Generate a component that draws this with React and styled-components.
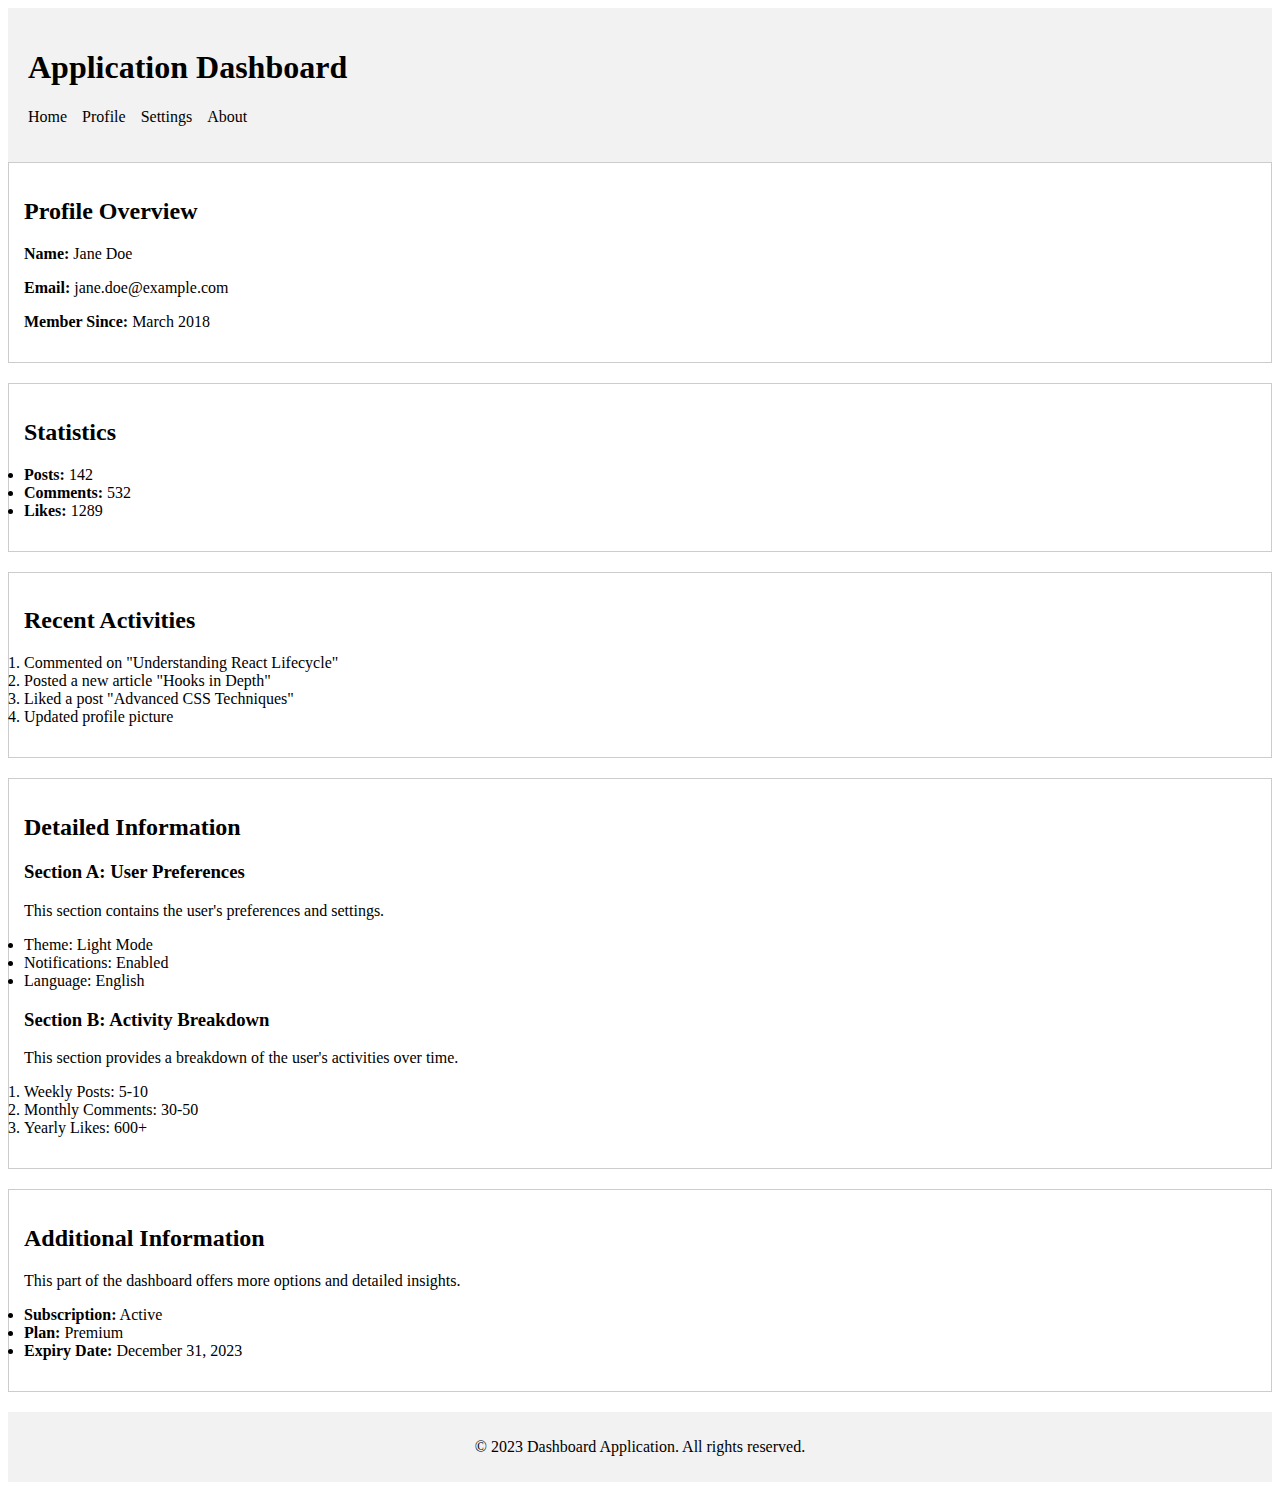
import styled, { createGlobalStyle } from 'styled-components';

const GlobalStyle = createGlobalStyle`
  body {
    margin: 8px;
    font-family: 'Liberation Serif', 'Times New Roman', serif;
    font-size: 16px;
    color: #000;
    background: #fff;
  }
`;

const navItems = ['Home', 'Profile', 'Settings', 'About'];

const App = () => {
  return (
    <>
      <GlobalStyle />
      <Header>
        <h1>Application Dashboard</h1>
        <NavList>
          {navItems.map((item) => (
            <li key={item}>
              <a href={'#'}>{item}</a>
            </li>
          ))}
        </NavList>
      </Header>
      <main>
        <Card>
          <h2>Profile Overview</h2>
          <p>
            <strong>Name:</strong> Jane Doe
          </p>
          <p>
            <strong>Email:</strong> jane.doe@example.com
          </p>
          <p>
            <strong>Member Since:</strong> March 2018
          </p>
        </Card>
        <Card>
          <h2>Statistics</h2>
          <ul>
            <li>
              <strong>Posts:</strong> 142
            </li>
            <li>
              <strong>Comments:</strong> 532
            </li>
            <li>
              <strong>Likes:</strong> 1289
            </li>
          </ul>
        </Card>
        <Card>
          <h2>Recent Activities</h2>
          <ol>
            <li>Commented on "Understanding React Lifecycle"</li>
            <li>Posted a new article "Hooks in Depth"</li>
            <li>Liked a post "Advanced CSS Techniques"</li>
            <li>Updated profile picture</li>
          </ol>
        </Card>
        <Card>
          <h2>Detailed Information</h2>
          <h3>Section A: User Preferences</h3>
          <p>This section contains the user's preferences and settings.</p>
          <ul>
            <li>Theme: Light Mode</li>
            <li>Notifications: Enabled</li>
            <li>Language: English</li>
          </ul>
          <h3>Section B: Activity Breakdown</h3>
          <p>This section provides a breakdown of the user's activities over time.</p>
          <ol>
            <li>Weekly Posts: 5-10</li>
            <li>Monthly Comments: 30-50</li>
            <li>Yearly Likes: 600+</li>
          </ol>
        </Card>
        <Card>
          <h2>Additional Information</h2>
          <p>This part of the dashboard offers more options and detailed insights.</p>
          <ul>
            <li>
              <strong>Subscription:</strong> Active
            </li>
            <li>
              <strong>Plan:</strong> Premium
            </li>
            <li>
              <strong>Expiry Date:</strong> December 31, 2023
            </li>
          </ul>
        </Card>
      </main>
      <Footer>
        <p>&copy; 2023 Dashboard Application. All rights reserved.</p>
      </Footer>
    </>
  );
};

const Header = styled.header`
  background: #f2f2f2;
  padding: 20px;
  h1 {
    font-size: 32px;
    margin: 21.44px 0;
  }
`;

const NavList = styled.ul`
  list-style: none;
  padding: 0;
  margin: 16px 0;
  li {
    display: inline;
    margin-right: 15px;
  }
  a {
    color: #000;
    text-decoration: none;
  }
`;

const Card = styled.section`
  border: 1px solid #ccc;
  padding: 15px;
  margin-bottom: 20px;
  h2 {
    font-size: 24px;
    margin: 19.92px 0;
  }
  h3 {
    font-size: 18.72px;
    margin: 18.72px 0;
  }
  p {
    margin: 16px 0;
  }
  ul,
  ol {
    padding-left: 0;
    margin: 16px 0;
  }
`;

const Footer = styled.footer`
  background: #f2f2f2;
  padding: 10px;
  text-align: center;
  p {
    margin: 16px 0;
  }
`;

export default App;
